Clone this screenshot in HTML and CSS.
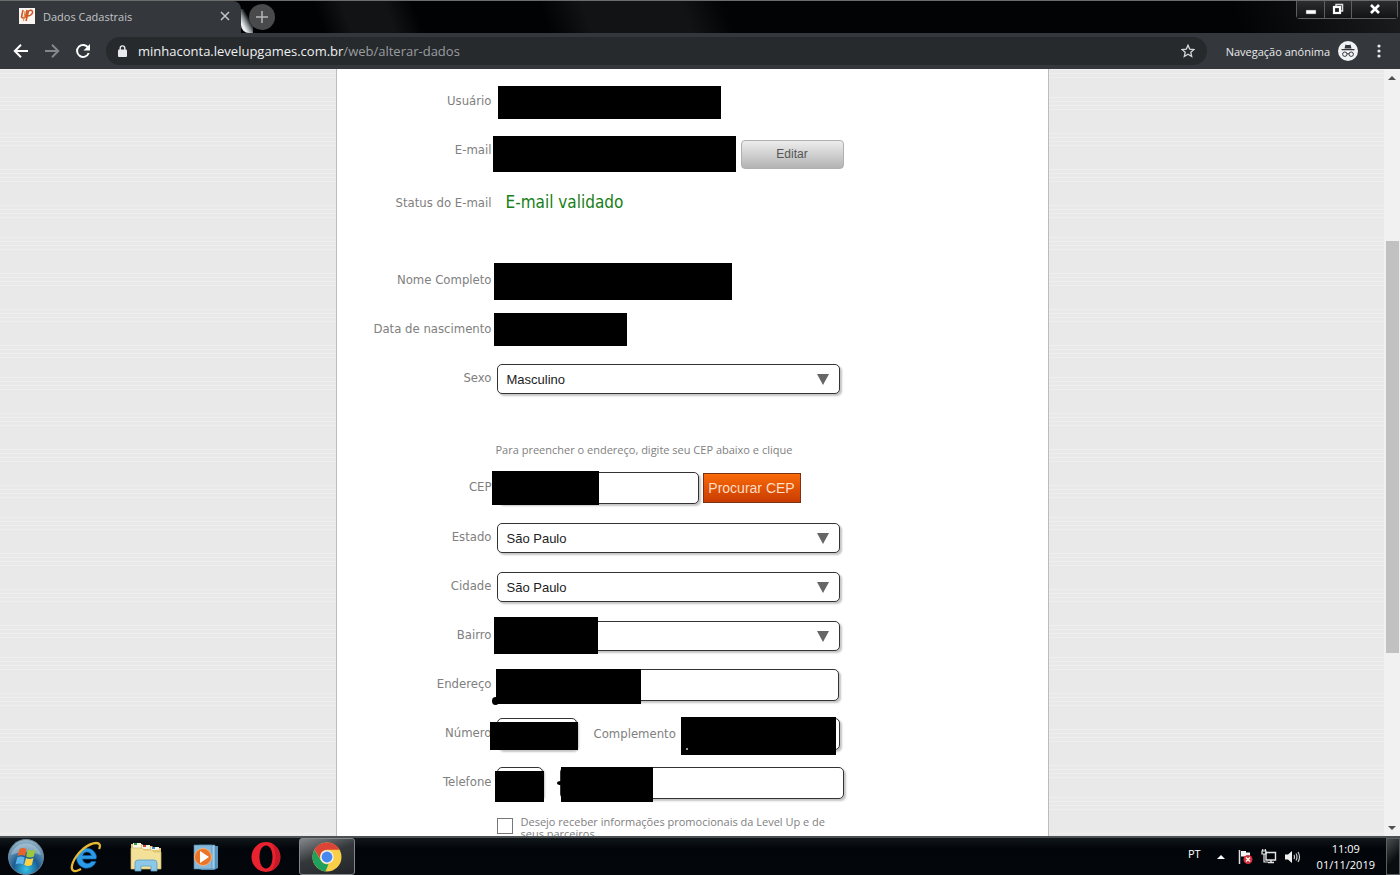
FILE: index.html
```html
<!doctype html>
<html lang="pt-BR">

<head>
    <meta charset="UTF-8">
    <meta name="viewport" content="width=device-width, initial-scale=1.0">
    <title>Dados Cadastrais</title>
    <link rel="stylesheet" href="styles.css">
</head>

<body>
    <header class="tabstrip">
        <div class="tab">
            <svg class="favicon" viewBox="0 0 16 16">
                <rect width="16" height="16" fill="#fbf6f2" />
                <path d="M4 2 L2.500 9 Q4 11 6.500 9 L8 2 M7 13 L9.500 3 Q14 1 13.500 5 Q12 8 8.500 8" fill="none" stroke="#cf5a28" stroke-width="1.600" />
                <path d="M6 3 L4.500 13" stroke="#e08a4a" stroke-width="1" />
            </svg>
            <span class="tab-title">Dados Cadastrais</span>
            <button class="tab-close" aria-label="Fechar">
                <svg width="10" height="10" viewBox="0 0 10 10"><path d="M1 1 L9 9 M9 1 L1 9" stroke="#c4c7ca" stroke-width="1.500" /></svg>
            </button>
        </div>
        <span class="glint"></span>
        <button class="new-tab" aria-label="Nova guia">
            <svg width="12" height="12" viewBox="0 0 12 12"><path d="M6 0 V12 M0 6 H12" stroke="#b4b6b8" stroke-width="1.500" /></svg>
        </button>
        <div class="window-controls">
            <button class="win-btn" aria-label="Minimizar">
                <svg width="12" height="12" viewBox="0 0 12 12"><rect x="1" y="7" width="10" height="4" fill="#fff" stroke="#555" stroke-width=".5" /></svg>
            </button>
            <button class="win-btn" aria-label="Restaurar">
                <svg width="12" height="12" viewBox="0 0 12 12"><path d="M4 3 V1.500 H10.500 V8 H9" fill="none" stroke="#ddd" stroke-width="1.500" /><rect x="2" y="4" width="6" height="6" fill="none" stroke="#fff" stroke-width="2.200" /></svg>
            </button>
            <button class="win-btn win-close" aria-label="Fechar janela">
                <svg width="12" height="12" viewBox="0 0 12 12"><path d="M2 2 L10 10 M10 2 L2 10" stroke="#fff" stroke-width="2.600" /></svg>
            </button>
        </div>
    </header>

    <nav class="toolbar">
        <button class="nav-btn" aria-label="Voltar">
            <svg width="16" height="16" viewBox="0 0 16 16"><path d="M15 8 H2 M8 1.800 L1.800 8 L8 14.200" fill="none" stroke="#fff" stroke-width="2" /></svg>
        </button>
        <button class="nav-btn" aria-label="Avançar">
            <svg width="16" height="16" viewBox="0 0 16 16"><path d="M1 8 H14 M8 1.800 L14.200 8 L8 14.200" fill="none" stroke="#85888b" stroke-width="2" /></svg>
        </button>
        <button class="nav-btn" aria-label="Atualizar">
            <svg width="16" height="16" viewBox="0 0 16 16"><path d="M13.200 4.800 A6 6 0 1 0 13.700 10" fill="none" stroke="#fff" stroke-width="2" /><path d="M15 1 V7.500 H8.500 Z" fill="#fff" /></svg>
        </button>
        <div class="omnibox">
            <svg class="lock" width="9" height="12" viewBox="0 0 9 12"><rect y="4.500" width="9" height="7.500" rx="1" fill="#e8eaed" /><path d="M2.200 5 V3.200 A2.300 2.300 0 0 1 6.800 3.200 V5" fill="none" stroke="#e8eaed" stroke-width="1.400" /></svg>
            <span class="url">minhaconta.levelupgames.com.br<span class="url-path">/web/alterar-dados</span></span>
            <svg class="star" width="14" height="14" viewBox="0 0 14 14"><path d="M7 1.200 L8.700 5.100 L13 5.500 L9.800 8.300 L10.700 12.500 L7 10.300 L3.300 12.500 L4.200 8.300 L1 5.500 L5.300 5.100 Z" fill="none" stroke="#d5d7d9" stroke-width="1.300" /></svg>
        </div>
        <span class="incognito">Navegação anónima</span>
        <svg class="avatar" width="20" height="20" viewBox="0 0 20 20">
            <circle cx="10" cy="10" r="10" fill="#f1f3f4" />
            <path d="M6.500 7.500 L7.500 3.500 Q10 4.500 12.500 3.500 L13.500 7.500 Z M3.500 8 H16.500 V9.300 H3.500 Z" fill="#33363a" />
            <circle cx="6.800" cy="13.200" r="2.200" fill="none" stroke="#33363a" />
            <circle cx="13.200" cy="13.200" r="2.200" fill="none" stroke="#33363a" />
            <path d="M9 13 Q10 12.200 11 13" fill="none" stroke="#33363a" />
        </svg>
        <button class="menu-btn" aria-label="Menu">
            <svg width="4" height="14" viewBox="0 0 4 14"><circle cx="2" cy="2" r="1.600" fill="#e8eaed" /><circle cx="2" cy="7" r="1.600" fill="#e8eaed" /><circle cx="2" cy="12" r="1.600" fill="#e8eaed" /></svg>
        </button>
    </nav>

    <div class="viewport">
        <main class="page">
            <form class="panel">
                <section class="group">
                    <div class="row">
                        <span class="label">Usuário</span>
                        <div class="field"><span class="mask mask-user"></span></div>
                    </div>
                    <div class="row">
                        <span class="label">E-mail</span>
                        <div class="field field-email">
                            <span class="mask mask-email"></span>
                            <button type="button" class="btn-edit">Editar</button>
                        </div>
                    </div>
                    <div class="row row-status">
                        <span class="label">Status do E-mail</span>
                        <span class="status">E-mail validado</span>
                    </div>
                </section>

                <section class="group">
                    <div class="row">
                        <span class="label">Nome Completo</span>
                        <div class="field"><span class="mask mask-name"></span></div>
                    </div>
                    <div class="row">
                        <span class="label">Data de nascimento</span>
                        <div class="field"><span class="mask mask-birth"></span></div>
                    </div>
                    <div class="row">
                        <label class="label" for="sexo">Sexo</label>
                        <div class="field select">
                            <select id="sexo"><option>Masculino</option></select>
                        </div>
                    </div>
                </section>

                <section class="group">
                    <p class="note">Para preencher o endereço, digite seu CEP abaixo e clique</p>
                    <div class="row row-cep">
                        <label class="label" for="cep">CEP</label>
                        <div class="field">
                            <input type="text" id="cep" class="input-cep">
                            <span class="mask mask-cep"></span>
                            <button type="button" class="btn-cep">Procurar CEP</button>
                        </div>
                    </div>
                    <div class="row">
                        <label class="label" for="estado">Estado</label>
                        <div class="field select">
                            <select id="estado"><option>São Paulo</option></select>
                        </div>
                    </div>
                    <div class="row">
                        <label class="label" for="cidade">Cidade</label>
                        <div class="field select">
                            <select id="cidade"><option>São Paulo</option></select>
                        </div>
                    </div>
                    <div class="row">
                        <label class="label" for="bairro">Bairro</label>
                        <div class="field select">
                            <select id="bairro"><option></option></select>
                            <span class="mask mask-district"></span>
                        </div>
                    </div>
                    <div class="row">
                        <label class="label" for="endereco">Endereço</label>
                        <div class="field">
                            <input type="text" id="endereco" class="input-full">
                            <span class="mask mask-street"></span>
                        </div>
                    </div>
                    <div class="row">
                        <label class="label" for="numero">Número</label>
                        <div class="field">
                            <input type="text" id="numero" class="input-number">
                            <span class="mask mask-number"></span>
                            <label class="label-inline" for="complemento">Complemento</label>
                            <input type="text" id="complemento" class="input-extra">
                            <span class="mask mask-extra"></span>
                        </div>
                    </div>
                    <div class="row">
                        <label class="label" for="ddd">Telefone</label>
                        <div class="field">
                            <input type="text" id="ddd" class="input-ddd">
                            <span class="mask mask-ddd"></span>
                            <input type="text" id="telefone" class="input-phone" aria-label="Número do telefone">
                            <span class="mask mask-phone"></span>
                        </div>
                    </div>
                    <div class="optin">
                        <input type="checkbox" id="promo">
                        <label for="promo">Desejo receber informações promocionais da Level Up e de seus parceiros</label>
                    </div>
                </section>
            </form>
        </main>
        <div class="scrollbar">
            <span class="scroll-up"></span>
            <span class="scroll-before"></span>
            <span class="scroll-thumb"></span>
            <span class="scroll-after"></span>
            <span class="scroll-down"></span>
        </div>
    </div>

    <footer class="taskbar">
        <button class="task start" aria-label="Iniciar">
            <svg width="38" height="38" viewBox="0 0 38 38">
                <defs>
                    <radialGradient id="orb" cx=".5" cy=".85" r=".8">
                        <stop offset="0" stop-color="#35c3ea" />
                        <stop offset=".45" stop-color="#1b5d92" />
                        <stop offset="1" stop-color="#8fb0c4" />
                    </radialGradient>
                </defs>
                <circle cx="19" cy="19" r="17.500" fill="url(#orb)" stroke="#6b8597" />
                <path d="M4 17 A15.500 15.500 0 0 1 34 17 Q19 11 4 17" fill="#fff" opacity=".3" />
                <path d="M12.500 11 Q16 9 19.500 11 L18 18 Q14.500 16 10.500 18 Z" fill="#e8622b" />
                <path d="M20.800 11.500 Q24.500 13.500 28.500 11.500 L26.800 18.500 Q23 20.500 19.200 18.500 Z" fill="#9cc83c" />
                <path d="M10.200 19.500 Q14 17.500 17.600 19.500 L16 26.500 Q12.500 24.500 8.500 26.500 Z" fill="#5fb4ec" />
                <path d="M19 20 Q22.500 22 26.500 20 L24.800 27 Q21 29 17.300 27 Z" fill="#fbd145" />
            </svg>
        </button>
        <button class="task" aria-label="Internet Explorer">
            <svg width="34" height="34" viewBox="0 0 34 34">
                <path d="M27 19 H13.500 A5 5 0 0 0 22.500 21.500 H27 A10 10 0 1 1 27.500 17 Z M13.600 15.500 H22.400 A4.500 4.500 0 0 0 13.600 15.500" fill="#2b9be6" fill-rule="evenodd" stroke="#0e62b4" stroke-width=".6" />
                <path d="M30 9 C34 1 24 1 14 9 C4 18 0 29 5 31 C7 32 10 30 12 29" fill="none" stroke="#e9b832" stroke-width="2.300" />
            </svg>
        </button>
        <button class="task" aria-label="Windows Explorer">
            <svg width="34" height="34" viewBox="0 0 34 34">
                <path d="M2 4 H13 L15 6 H23 L25 8 H32 V28 H2 Z" fill="#e5cb78" />
                <path d="M4 3 H12 V8 H4 Z M13 5 H21 V9 H13 Z M22 7 H30 V10 H22 Z" fill="#f8f4e6" />
                <path d="M5 3 H8 V5 H5 Z" fill="#3b9b4a" />
                <path d="M14 5 H17 V7 H14 Z" fill="#d14332" />
                <path d="M23 7 H26 V9 H23 Z" fill="#4493cf" />
                <path d="M2 8 H13 L15 10 H23 L25 12 H32 V29 H2 Z" fill="#f4e199" stroke="#d3b863" stroke-width=".7" />
                <path d="M6 31 V23 Q6 20 9 20 H25 Q28 20 28 23 V31 H22 V26 H12 V31 Z" fill="#8cc8e8" stroke="#5c9dc4" stroke-width=".8" />
            </svg>
        </button>
        <button class="task" aria-label="Windows Media Player">
            <svg width="34" height="34" viewBox="0 0 34 34">
                <path d="M12 6 H29 V28 L25 30 H12 Z" fill="#5791bd" />
                <path d="M10 5 H26 V29 H10 Z" fill="#9fcde9" stroke="#4c84ac" stroke-width=".6" />
                <path d="M5 5 H23 V29 H5 Z" fill="#86b9da" stroke="#4c84ac" stroke-width=".6" />
                <circle cx="14" cy="17" r="8.500" fill="#ea7528" stroke="#f6b27c" stroke-width="1" />
                <path d="M11 11 L20 17 L11 23 Z" fill="#fff" />
            </svg>
        </button>
        <button class="task" aria-label="Opera">
            <svg width="34" height="34" viewBox="0 0 34 34">
                <path d="M17 2 A14.500 15 0 1 0 17 32 A14.500 15 0 1 0 17 2 M17 5.500 C21 5.500 23.500 10.500 23.500 17 C23.500 23.500 21 28.500 17 28.500 C13 28.500 10.500 23.500 10.500 17 C10.500 10.500 13 5.500 17 5.500" fill="#e8222f" fill-rule="evenodd" />
                <path d="M22 3 A14.500 15 0 0 1 22 31 C28 26 28 8 22 3" fill="#a50f20" opacity=".5" />
            </svg>
        </button>
        <button class="task task-active" aria-label="Google Chrome">
            <svg width="32" height="32" viewBox="0 0 32 32">
                <circle cx="16" cy="16" r="14.500" fill="#f9cf48" />
                <path d="M3.440 8.750 A14.500 14.500 0 0 1 28.560 8.750 H16 A7 7 0 0 0 9.600 18.500 Z" fill="#db4437" />
                <path d="M3.440 8.750 L9.900 19.500 A7 7 0 0 0 17.500 23 L14.500 30.420 A14.500 14.500 0 0 1 3.440 8.750" fill="#1fa05c" />
                <circle cx="16" cy="16" r="6.800" fill="#f1f1f1" />
                <circle cx="16" cy="16" r="5.400" fill="#4687f0" />
            </svg>
        </button>

        <div class="tray">
            <span class="lang">PT</span>
            <svg class="tray-up" width="8" height="4" viewBox="0 0 8 4"><path d="M0 4 L4 0 L8 4 Z" fill="#fff" /></svg>
            <svg class="tray-flag" width="15" height="15" viewBox="0 0 15 15">
                <path d="M1.500 1 V15" stroke="#ddd" stroke-width="1.500" />
                <path d="M3 2 H8 V3.500 H12 V9 H7 V7.500 H3 Z" fill="#f4f4f4" />
                <circle cx="10" cy="10.500" r="4.500" fill="#d5303a" />
                <path d="M8 8.500 L12 12.500 M12 8.500 L8 12.500" stroke="#fff" stroke-width="1.400" />
            </svg>
            <svg class="tray-net" width="16" height="15" viewBox="0 0 16 15">
                <path d="M5 3.500 H14.500 V11 H5 Z M7 13.500 H13 M10 11 V13" fill="none" stroke="#e6e6e6" stroke-width="1.400" />
                <path d="M1 2 H5 V5 H1 Z M1.700 0 V2 M4.300 0 V2 M3 5 V13 H7" fill="none" stroke="#e6e6e6" stroke-width="1.200" />
            </svg>
            <svg class="tray-sound" width="16" height="14" viewBox="0 0 16 14">
                <path d="M0 4.500 H3 L7 1 V13 L3 9.500 H0 Z" fill="#f0f0f0" />
                <path d="M9 5 Q10 7 9 9 M11 3.500 Q13 7 11 10.500 M13 2 Q16 7 13 12" fill="none" stroke="#ccc" stroke-width="1.200" />
            </svg>
            <div class="clock">
                <time>11:09</time>
                <time>01/11/2019</time>
            </div>
            <button class="show-desktop" aria-label="Mostrar área de trabalho"></button>
        </div>
    </footer>
</body>

</html>
```
FILE: styles.css
```css
* {
    box-sizing: border-box;
}

body {
    margin: 0;
    height: 100vh;
    display: flex;
    flex-direction: column;
    overflow: hidden;
    font-family: "Open Sans", "Noto Sans", sans-serif;
    font-size: 11px;
}

button {
    padding: 0;
    border: none;
    background: none;
    font: inherit;
    cursor: pointer;
}

svg {
    display: block;
    flex: none;
}

/* browser window */
.tabstrip {
    flex: none;
    display: flex;
    align-items: center;
    height: 33px;
    border-top: 1px solid #6c6c6c;
    background: linear-gradient(70deg, #010203 23%, #111315 25%, #111315 28%, #010203 30%, #010203 39%, #111315 42%, #111315 49%, #020304 52%, #020304 88%, #1b1c1d 100%);
}

.tab {
    display: flex;
    align-items: center;
    gap: 8px;
    width: 241px;
    height: 32px;
    padding: 0 11px 2px 19px;
    border-radius: 0 8px 0 0;
    background: #34373b;
}

.favicon {
    width: 16px;
    height: 16px;
}

.tab-title {
    flex: 1;
    color: #c2c5c8;
}

.glint {
    width: 12px;
    height: 24px;
    margin-top: 8px;
    border-radius: 0 0 0 8px;
    background: linear-gradient(60deg, #e8ecee 25%, #80868a 45%, #010203 65%);
}

.new-tab {
    display: flex;
    align-items: center;
    justify-content: center;
    width: 26px;
    height: 26px;
    margin-left: -4px;
    border-radius: 50%;
    background: #484a4c;
}

.window-controls {
    align-self: flex-start;
    display: flex;
    height: 18px;
    margin-left: auto;
    margin-right: 2px;
    border: 1px solid #5d5f61;
    border-top: none;
    border-radius: 0 0 4px 4px;
}

.win-btn {
    display: flex;
    align-items: center;
    justify-content: center;
    width: 27px;
    padding-bottom: 2px;
    background: linear-gradient(#2b2d2e, #121314);
}

.win-btn + .win-btn {
    border-left: 1px solid #5d5f61;
}

.win-close {
    width: 46px;
}

.toolbar {
    flex: none;
    display: flex;
    align-items: center;
    height: 36px;
    padding-left: 13px;
    background: #34373b;
}

.nav-btn {
    width: 16px;
    margin-right: 15px;
}

.omnibox {
    flex: 1;
    display: flex;
    align-items: center;
    height: 28px;
    margin-right: 19px;
    padding: 0 12px;
    border-radius: 14px;
    background: #262a2d;
    font-size: 13px;
}

.url {
    flex: 1;
    margin-left: 11px;
    color: #eef0f1;
}

.url-path {
    color: #9a9da0;
}

.incognito {
    color: #e8eaed;
}

.avatar {
    margin-left: 8px;
}

.menu-btn {
    display: flex;
    justify-content: center;
    width: 42px;
}

/* page */
.viewport {
    flex: 1;
    display: flex;
    min-height: 0;
    background: #e9e9e9;
}

.page {
    flex: 1;
    overflow: hidden;
    background:
        repeating-linear-gradient(transparent 0 9px, #e9e9e9 9px 28px, transparent 28px 35px),
        repeating-linear-gradient(#efefef 0 1px, #e9e9e9 1px 4px);
}

.panel {
    width: 100%;
    max-width: 713px;
    min-height: 100%;
    margin: 0 auto;
    padding-top: 17px;
    border: 1px solid #bdbdbd;
    border-width: 0 1px;
    background: #fff;
    color: #808080;
    font-family: "DejaVu Sans Condensed", Tahoma, sans-serif;
    font-size: 13px;
}

.group {
    margin-bottom: 45px;
}

.row {
    display: flex;
    align-items: center;
    gap: 5px;
    height: 32px;
    margin-bottom: 17px;
}

.row:last-child {
    margin-bottom: 0;
}

.row-status {
    height: 36px;
}

.row-cep {
    margin-bottom: 18px;
}

.label {
    width: 155px;
    padding-bottom: 3px;
    text-align: right;
}

.row-status .label {
    padding-bottom: 0;
}

.field {
    position: relative;
    display: flex;
    align-items: center;
    width: 347px;
    height: 32px;
}

.field-email {
    align-items: flex-end;
    justify-content: flex-end;
    height: 36px;
}

.status {
    margin-left: 9px;
    color: #168016;
    font-size: 17px;
}

input[type="text"],
select {
    height: 32px;
    border: 1px solid #333;
    border-radius: 5px;
    background: #fff;
    box-shadow: 2px 2px 2px #c4c4c4;
    font-family: "Liberation Sans", Arial, sans-serif;
    font-size: 13px;
}

select {
    width: 343px;
    height: 30px;
    padding: 0 9px;
    color: #222;
    appearance: none;
}

.select::after {
    content: "";
    position: absolute;
    top: 11px;
    right: 15px;
    border: 6px solid transparent;
    border-top: 11px solid #666;
    border-bottom: none;
}

.input-full {
    width: 342px;
}

.input-cep {
    width: 202px;
}

.input-number {
    width: 80px;
}

.input-extra {
    width: 159px;
}

.input-ddd {
    width: 46px;
}

.input-phone {
    width: 284px;
    margin-left: 17px;
}

.label-inline {
    margin: 0 5px 2px 17px;
}

.btn-edit {
    width: 103px;
    height: 29px;
    padding-bottom: 2px;
    border: 1px solid #b0b0b0;
    border-radius: 4px;
    background: linear-gradient(#ededed, #b3b3b3);
    color: #555;
    font-family: "Liberation Sans", Arial, sans-serif;
    font-size: 12px;
}

.btn-cep {
    width: 98px;
    height: 30px;
    margin-left: 4px;
    border: 1px solid #7c3212;
    background: linear-gradient(#f96a08, #c93c02);
    color: #ffdfc4;
    font-family: "Liberation Sans", Arial, sans-serif;
    font-size: 14px;
}

.note {
    margin: 0 0 12px 159px;
    font-family: "Open Sans", "Noto Sans", sans-serif;
    font-size: 11px;
    line-height: 20px;
}

/* blacked-out values laid over the fields */
.mask {
    position: absolute;
    top: 0;
    left: -3px;
    height: 33px;
    background: #000;
}

.mask-user {
    left: 1px;
    width: 223px;
}

.mask-email {
    top: 3px;
    left: -4px;
    width: 243px;
    height: 36px;
}

.mask-name {
    top: -2px;
    width: 238px;
    height: 37px;
}

.mask-birth {
    top: -1px;
    width: 133px;
}

.mask-cep {
    top: -1px;
    left: -5px;
    width: 107px;
    height: 34px;
}

.mask-district {
    top: -3px;
    z-index: 1;
    width: 104px;
    height: 37px;
}

.mask-street {
    top: 0;
    left: -1px;
    width: 145px;
    height: 35px;
}

.mask-street::before {
    content: "";
    position: absolute;
    left: -4px;
    bottom: -1px;
    width: 7px;
    height: 8px;
    border-radius: 50%;
    background: #000;
}

.mask-number {
    top: 4px;
    left: -7px;
    width: 88px;
    height: 28px;
}

.mask-extra {
    top: -1px;
    left: 184px;
    width: 155px;
    height: 38px;
}

.mask-extra::before {
    content: "";
    position: absolute;
    left: 5px;
    bottom: 5px;
    width: 2px;
    height: 2px;
    background: #999;
}

.mask-ddd {
    top: 4px;
    left: -2px;
    width: 49px;
    height: 31px;
}

.mask-phone {
    top: 0;
    left: 64px;
    width: 92px;
    height: 35px;
}

.mask-phone::before {
    content: "";
    position: absolute;
    top: 14px;
    left: -4px;
    width: 8px;
    height: 4px;
    border-radius: 50%;
    background: #000;
}

.optin {
    display: flex;
    align-items: flex-start;
    margin-left: 160px;
    font-family: "Open Sans", "Noto Sans", sans-serif;
    font-size: 11px;
    line-height: 12px;
}

.optin input {
    flex: none;
    width: 16px;
    height: 16px;
    margin: 2px 8px 0 0;
    border: 1px solid #777;
    background: #fff;
    appearance: none;
}

.optin label {
    width: 312px;
}

.scrollbar {
    display: flex;
    flex-direction: column;
    align-items: center;
    width: 16px;
    background: #f1f1f1;
}

.scroll-up,
.scroll-down {
    display: flex;
    align-items: center;
    justify-content: center;
    height: 17px;
}

.scroll-up::before,
.scroll-down::before {
    content: "";
    border: 4px solid transparent;
    border-top: none;
    border-bottom: 4px solid #505050;
}

.scroll-down::before {
    border-top: 4px solid #505050;
    border-bottom: none;
}

.scroll-before {
    flex: 155;
}

.scroll-thumb {
    flex: 412;
    width: 13px;
    background: #c1c1c1;
}

.scroll-after {
    flex: 166;
}

/* windows taskbar */
.taskbar {
    flex: none;
    display: flex;
    align-items: center;
    height: 39px;
    border-top: 2px solid #4a4f52;
    background: linear-gradient(#10161a, #02060b 30%, #03070c);
}

.task {
    display: flex;
    align-items: center;
    justify-content: center;
    width: 60px;
    height: 37px;
}

.start {
    width: 52px;
    margin-right: 4px;
}

.task-active {
    width: 56px;
    margin-left: 3px;
    border: 1px solid #84888a;
    border-radius: 3px;
    background: linear-gradient(160deg, #84888b, #34383b 45%, #22262a);
}

.tray {
    display: flex;
    align-items: center;
    height: 37px;
    margin-left: auto;
    color: #fff;
}

.lang {
    margin: 0 16px 6px 0;
}

.tray-up {
    margin-right: 13px;
}

.tray-flag {
    margin-right: 8px;
}

.tray-net {
    margin-right: 8px;
}

.clock {
    display: flex;
    flex-direction: column;
    align-items: center;
    margin: 0 11px 0 16px;
    line-height: 16px;
}

.show-desktop {
    width: 14px;
    height: 37px;
    border: 1px solid #5a5e61;
    background: linear-gradient(135deg, #4a4e51, #0b0e11 60%);
}
```
